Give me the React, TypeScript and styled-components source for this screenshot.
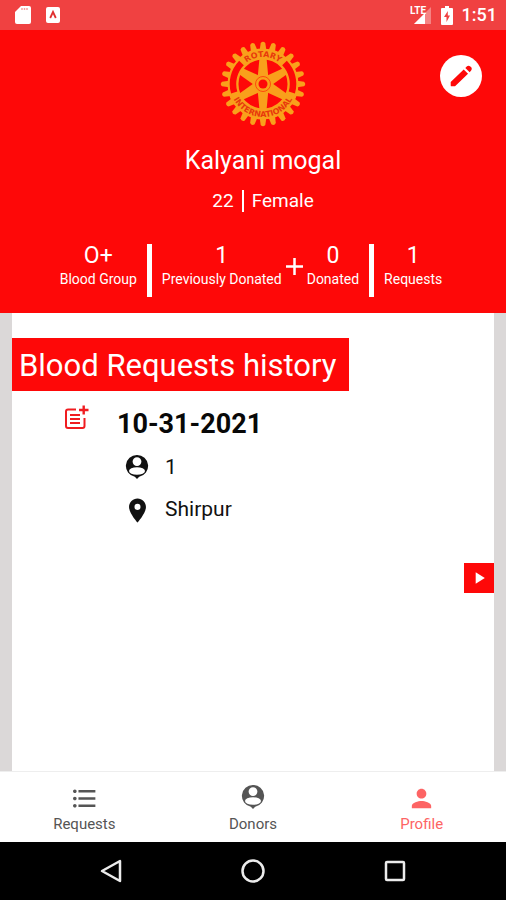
import React from "react";
import styled, { createGlobalStyle } from "styled-components";
import { MdLocationOn, MdPerson, MdFormatListBulleted, MdPlayArrow } from "react-icons/md";

const GlobalStyle = createGlobalStyle`
  * { box-sizing: border-box; }
  body { margin: 0; font-family: Roboto, "Liberation Sans", sans-serif; background: #dbd8d8; }
  button { font: inherit; border: 0; padding: 0; cursor: pointer; }
  h1, h2, h3, p, dl, dd, dt { margin: 0; font-weight: 400; }
`;

const Screen = styled.div`
  min-height: 100vh;
  display: flex;
  flex-direction: column;
`;

const StatusBar = styled.div`
  height: 30px;
  padding: 0 9px 0 14px;
  display: flex;
  align-items: center;
  justify-content: space-between;
  background: #f04141;
  color: #fff;
`;

const StatusGroup = styled.div<{ $gap: number }>`
  display: flex;
  align-items: center;
  gap: ${(p) => p.$gap}px;
`;

const Clock = styled.span`
  font-size: 18px;
  line-height: 30px;
  font-weight: 500;
`;

const Header = styled.header`
  position: relative;
  display: flex;
  flex-direction: column;
  align-items: center;
  padding: 10px 0 16px;
  background: #fe0808;
  color: #fff;
`;

const Identity = styled.div`
  display: flex;
  flex-direction: column;
  align-items: center;
  padding-left: 20px;
`;

const Name = styled.h1`
  margin-top: 19px;
  font-size: 25px;
  line-height: 28px;
`;

const Facts = styled.p`
  display: flex;
  align-items: center;
  gap: 8px;
  margin-top: 14px;
  font-size: 19px;
  line-height: 24px;
`;

const Rule = styled.span<{ $width: number; $height: number }>`
  width: ${(p) => p.$width}px;
  height: ${(p) => p.$height}px;
  background: #fff;
`;

const EditButton = styled.button`
  position: absolute;
  top: 25px;
  right: 24px;
  width: 42px;
  height: 42px;
  border-radius: 50%;
  display: grid;
  place-items: center;
  background: #fff;
  color: #fe0808;
`;

const Stats = styled.dl`
  display: flex;
  align-items: center;
  gap: 10px;
  margin-top: 30px;
  padding-right: 4px;
`;

const StatPair = styled.div`
  display: flex;
  align-items: center;
  gap: 4px;
`;

const Stat = styled.div`
  display: flex;
  flex-direction: column-reverse;
  align-items: center;
  padding-bottom: 8px;
`;

const StatLabel = styled.dt`
  font-size: 14px;
  line-height: 20px;
  white-space: nowrap;
`;

const StatValue = styled.dd`
  font-size: 23px;
  line-height: 26px;
`;

const PlusSign = styled.svg`
  margin-bottom: 8px;
`;

const Panel = styled.main`
  flex: 1;
  display: flex;
  flex-direction: column;
  align-items: flex-start;
  margin: 0 12px;
  padding-top: 25px;
  background: #fff;
`;

const SectionTitle = styled.h2`
  padding: 10px 13px 7px 7px;
  background: #fe0808;
  color: #fff;
  font-size: 31px;
  line-height: 36px;
`;

const Entry = styled.article`
  display: flex;
  gap: 28px;
  padding: 14px 0 0 52px;
`;

const EntryBody = styled.div`
  display: flex;
  flex-direction: column;
`;

const EntryDate = styled.h3`
  margin-bottom: 3px;
  font-size: 27px;
  line-height: 38px;
  font-weight: 700;
  color: #080808;
`;

const Detail = styled.p`
  display: flex;
  align-items: center;
  gap: 13px;
  height: 42px;
  padding-left: 5px;
  font-size: 21px;
  color: #111;
`;

const IconSlot = styled.span`
  display: grid;
  place-items: center;
  width: 30px;
  height: 26px;
`;

const DrawerButton = styled.button`
  align-self: flex-end;
  margin-top: 33px;
  width: 30px;
  height: 30px;
  display: grid;
  place-items: center;
  background: #fe0808;
  color: #fff;
`;

const Tabs = styled.nav`
  display: grid;
  grid-template-columns: repeat(3, 1fr);
  height: 71px;
  border-top: 1px solid #eee;
  background: #fff;
`;

const Tab = styled.button<{ $active?: boolean }>`
  display: flex;
  flex-direction: column;
  align-items: center;
  padding-top: 12px;
  gap: 4px;
  background: none;
  color: ${(p) => (p.$active ? "#fd6464" : "#555")};
  font-size: 15px;
  line-height: 20px;
`;

const SystemBar = styled.div`
  display: flex;
  justify-content: center;
  gap: 94px;
  height: 58px;
  background: #000;
`;

const SystemButton = styled.button`
  width: 48px;
  display: grid;
  place-items: center;
  background: none;
  color: #ececec;
`;

const SdCard = () => (
  <svg width="18" height="20" viewBox="0 0 18 20" aria-hidden="true">
    <path d="M7 1h8a2 2 0 0 1 2 2v14a2 2 0 0 1-2 2H3a2 2 0 0 1-2-2V7z" fill="#fff" />
    <path d="M8 5V3M10.500 5V3M13 5V3" stroke="#f7a0a0" strokeWidth="1.500" />
  </svg>
);

const AppBadge = () => (
  <svg width="14" height="16" viewBox="0 0 14 16" aria-hidden="true">
    <rect width="14" height="16" rx="2" fill="#fff" />
    <path d="M4.200 11 7 5l2.800 6" fill="none" stroke="#e03030" strokeWidth="1.800" />
  </svg>
);

const Signal = () => (
  <svg width="22" height="20" viewBox="0 0 22 20" aria-hidden="true">
    <path d="M21 2v17H4z" fill="#fff" opacity=".35" />
    <path d="M15 8v11H4z" fill="#fff" />
    <text x="0" y="9" fontSize="10" fontWeight="700" fill="#fff" fontFamily="Roboto, sans-serif">LTE</text>
  </svg>
);

const Battery = () => (
  <svg width="12" height="19" viewBox="0 0 12 19" aria-hidden="true">
    <path d="M4 0h4v2h3a1 1 0 0 1 1 1v15a1 1 0 0 1-1 1H1a1 1 0 0 1-1-1V3a1 1 0 0 1 1-1h3z" fill="#fff" />
    <path d="M6.800 5 3 11h2.500v5L9 9.500H6.800z" fill="#f04141" />
  </svg>
);

const Pencil = () => (
  <svg width="26" height="26" viewBox="0 0 24 24" aria-hidden="true">
    <path
      fill="currentColor"
      d="M2.500 17.500 14.500 6l4 4L6.500 21.500H3.300a.8.8 0 0 1-.8-.8zM16 4.500l1.300-1.300c1-1 2.300-1 3.300 0l.6.600c1 1 1 2.300 0 3.300L20 8.500z"
    />
  </svg>
);

const PersonPin = () => (
  <svg width="24" height="26" viewBox="0 0 24 26" aria-hidden="true">
    <path
      fill="currentColor"
      fillRule="evenodd"
      d="M12 1a11 11 0 0 1 2.200 21.800L12 25l-2.200-2.200A11 11 0 0 1 12 1zm0 2.200a4.400 4.400 0 1 0 0 8.800 4.400 4.400 0 0 0 0-8.800zM4 17a8 3.800 0 0 0 16 0 8 3.800 0 0 0-16 0z"
    />
  </svg>
);

const PostAdd = () => (
  <svg width="25" height="25" viewBox="0 0 25 25" fill="none" stroke="#f01c20" aria-hidden="true">
    <path strokeWidth="2" d="M12 4.500H4a2 2 0 0 0-2 2V21a2 2 0 0 0 2 2h14.500a2 2 0 0 0 2-2v-8" />
    <path strokeWidth="2" d="M6 10h10M6 14h10M6 18h10" />
    <path strokeWidth="2.400" d="M15 5h9.500M19.700 .5v9" />
  </svg>
);

const spokes = [0, 60, 120, 180, 240, 300];
const teeth = Array.from({ length: 24 }, (_, i) => i * 15);

const WheelLogo = () => (
  <svg width="88" height="88" viewBox="-44 -44 88 88" role="img" aria-label="Rotary International">
    <defs>
      <path id="wheel-top" d="M-27 0a27 27 0 0 1 54 0" />
      <path id="wheel-bottom" d="M-32.500-5.650A33 33 0 0 0 0 33 33 33 0 0 0 32.500-5.650" />
    </defs>
    <g fill="#f9a01b">
      {teeth.map((a) => (
        <path key={a} transform={`rotate(${a})`} d="M-3.300-34-2.300-41q2.300-2.500 4.600 0L3.300-34z" />
      ))}
      {spokes.map((a) => (
        <path key={a} transform={`rotate(${a})`} d="M-5.500-5-3.500-26H3.500L5.500-5z" />
      ))}
      <circle r="9" />
    </g>
    <circle r="30" fill="none" stroke="#f9a01b" strokeWidth="11" />
    <path
      d="M-21.500-21A30 30 0 0 0-28.800 8.500M21.500-21A30 30 0 0 1 28.800 8.500"
      fill="none"
      stroke="#fe0808"
      strokeWidth="6.500"
    />
    <circle r="7.500" fill="none" stroke="#fe4a0c" strokeWidth="1" />
    <circle r="4.500" fill="#fe0808" />
    <g fill="#e8380c" fontFamily="'DejaVu Sans', sans-serif" fontWeight="700" fontSize="8" textAnchor="middle">
      <text><textPath href="#wheel-top" startOffset="50%">ROTARY</textPath></text>
      <text><textPath href="#wheel-bottom" startOffset="50%">INTERNATIONAL</textPath></text>
    </g>
  </svg>
);

const stat = (value: string, label: string) => (
  <Stat>
    <StatLabel>{label}</StatLabel>
    <StatValue>{value}</StatValue>
  </Stat>
);

export default function App() {
  return (
    <Screen>
      <GlobalStyle />
      <StatusBar>
        <StatusGroup $gap={14}>
          <SdCard />
          <AppBadge />
        </StatusGroup>
        <StatusGroup $gap={9}>
          <Signal />
          <Battery />
          <Clock>1:51</Clock>
        </StatusGroup>
      </StatusBar>
      <Header>
        <Identity>
          <WheelLogo />
          <Name>Kalyani mogal</Name>
          <Facts>
            <span>22</span>
            <Rule $width={2} $height={22} />
            <span>Female</span>
          </Facts>
        </Identity>
        <EditButton aria-label="Edit profile">
          <Pencil />
        </EditButton>
        <Stats>
          {stat("O+", "Blood Group")}
          <Rule $width={5} $height={53} />
          <StatPair>
            {stat("1", "Previously Donated")}
            <PlusSign width="17" height="17" viewBox="0 0 17 17" aria-hidden="true">
              <path d="M8.500 0v17M0 8.500h17" stroke="#fff" strokeWidth="2.500" />
            </PlusSign>
            {stat("0", "Donated")}
          </StatPair>
          <Rule $width={5} $height={53} />
          {stat("1", "Requests")}
        </Stats>
      </Header>
      <Panel>
        <SectionTitle>Blood Requests history</SectionTitle>
        <Entry>
          <PostAdd />
          <EntryBody>
            <EntryDate>10-31-2021</EntryDate>
            <Detail>
              <IconSlot><PersonPin /></IconSlot>
              1
            </Detail>
            <Detail>
              <IconSlot><MdLocationOn size={29} /></IconSlot>
              Shirpur
            </Detail>
          </EntryBody>
        </Entry>
        <DrawerButton aria-label="Open">
          <MdPlayArrow size={20} />
        </DrawerButton>
      </Panel>
      <Tabs>
        <Tab>
          <IconSlot><MdFormatListBulleted size={29} /></IconSlot>
          Requests
        </Tab>
        <Tab>
          <IconSlot><PersonPin /></IconSlot>
          Donors
        </Tab>
        <Tab $active aria-current="page">
          <IconSlot><MdPerson size={29} /></IconSlot>
          Profile
        </Tab>
      </Tabs>
      <SystemBar>
        <SystemButton aria-label="Back">
          <svg width="24" height="26" viewBox="0 0 24 26" fill="none" stroke="currentColor" strokeWidth="2.500">
            <path d="M21 3v20L3 13z" strokeLinejoin="round" />
          </svg>
        </SystemButton>
        <SystemButton aria-label="Home">
          <svg width="26" height="26" viewBox="0 0 26 26" fill="none" stroke="currentColor" strokeWidth="2.500">
            <circle cx="13" cy="13" r="10.500" />
          </svg>
        </SystemButton>
        <SystemButton aria-label="Recent apps">
          <svg width="24" height="24" viewBox="0 0 24 24" fill="none" stroke="currentColor" strokeWidth="2.500">
            <rect x="3" y="3" width="18" height="18" rx="1" />
          </svg>
        </SystemButton>
      </SystemBar>
    </Screen>
  );
}
